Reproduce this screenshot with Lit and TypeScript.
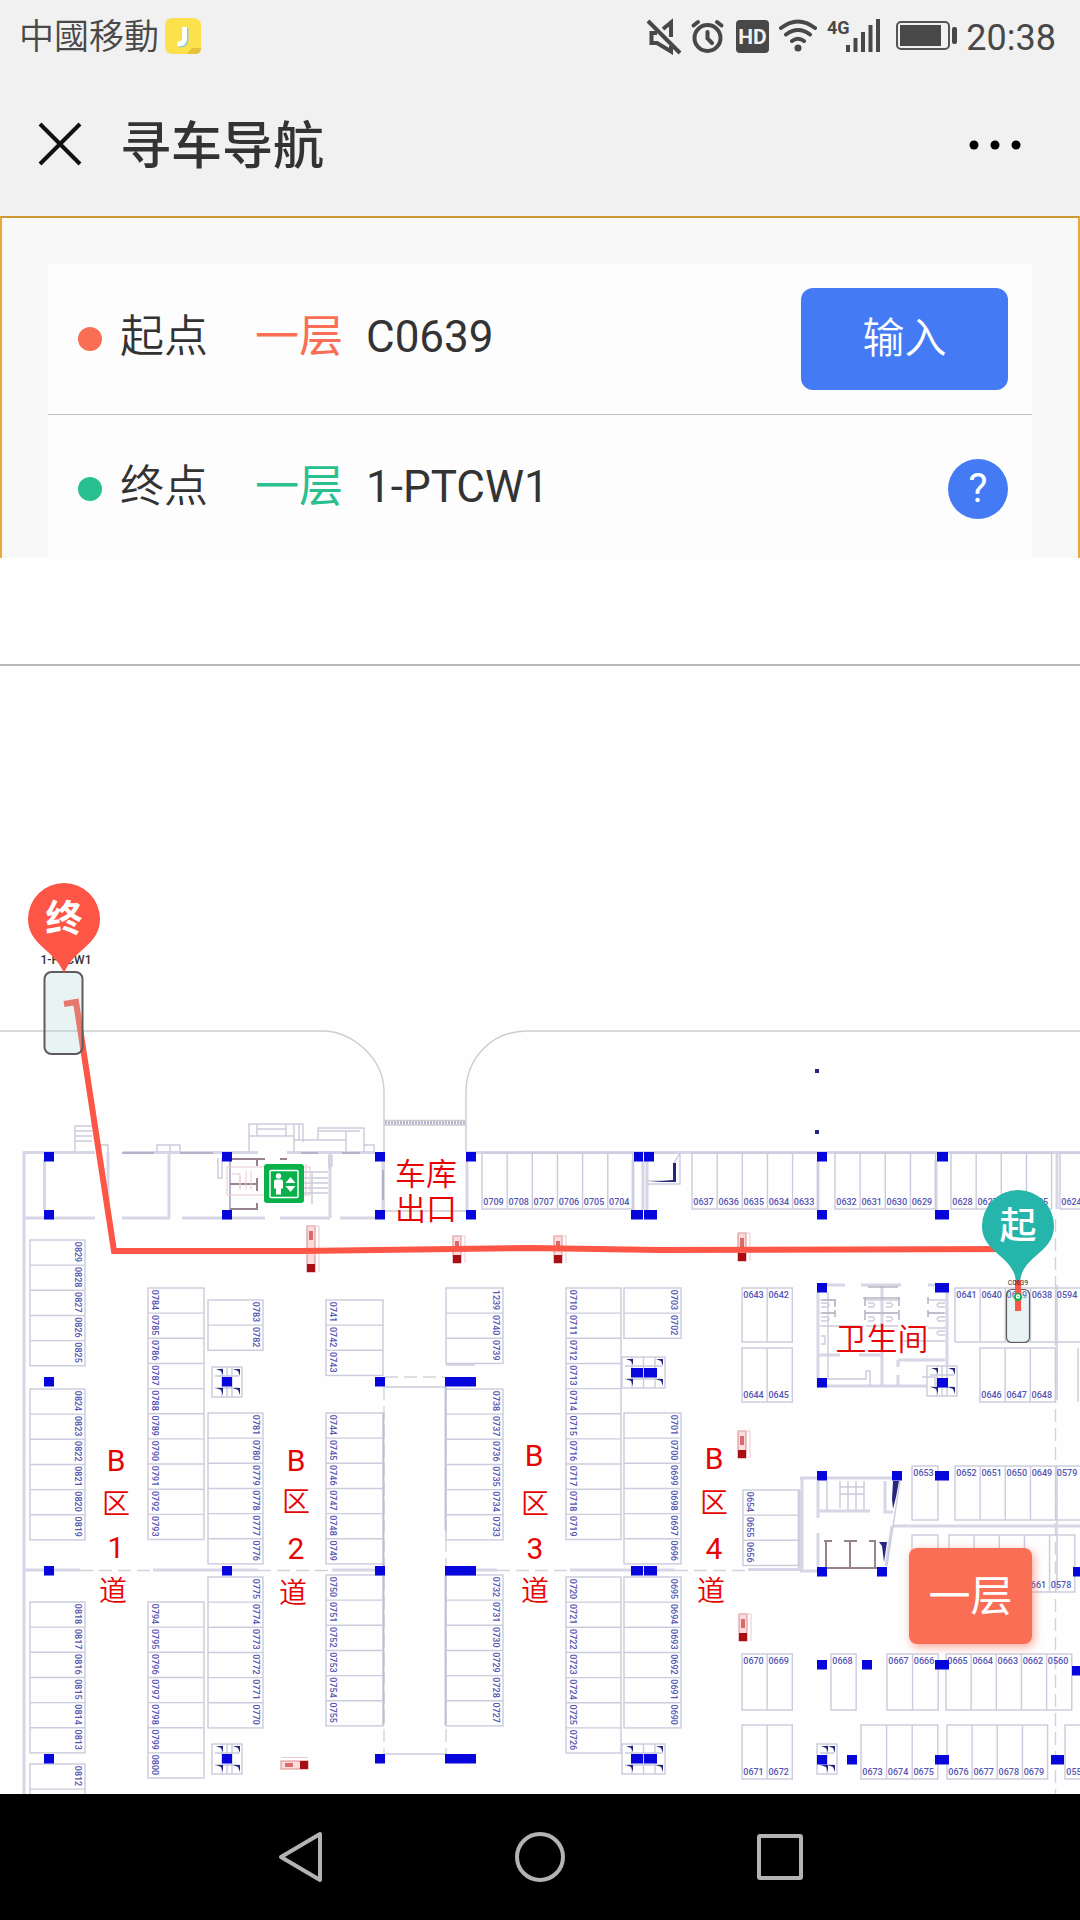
import { LitElement, html, svg, css } from "lit";
import { customElement, property } from "lit/decorators.js";

const STALL = 25.15;

type Side = "start" | "end";
interface Stalls { x: number; y: number; size: number; labels: string[]; side: Side; step?: number; }

const seq = (from: number, to: number): string[] => {
  const out: string[] = [];
  const d = from <= to ? 1 : -1;
  for (let n = from; n !== to + d; n += d) out.push(String(n).padStart(4, "0"));
  return out;
};

// Stalls stacked from top to bottom, with their numbers turned a quarter.
const STACKS: Stalls[] = [
  { x: 30, y: 1240, size: 55, labels: seq(829, 825), side: "end" },
  { x: 30, y: 1389, size: 55, labels: seq(824, 819), side: "end" },
  { x: 30, y: 1602, size: 55, labels: seq(818, 813), side: "end" },
  { x: 30, y: 1764, size: 55, labels: ["0812", ""], side: "end" },
  { x: 148, y: 1288, size: 56, labels: seq(784, 793), side: "start" },
  { x: 148, y: 1602, size: 56, labels: seq(794, 800), side: "start" },
  { x: 208, y: 1300, size: 55, labels: seq(783, 782), side: "end" },
  { x: 208, y: 1413, size: 55, labels: seq(781, 776), side: "end" },
  { x: 208, y: 1577, size: 55, labels: seq(775, 770), side: "end" },
  { x: 326, y: 1300, size: 57, labels: seq(741, 743), side: "start" },
  { x: 326, y: 1413, size: 57, labels: seq(744, 749), side: "start" },
  { x: 326, y: 1575, size: 57, labels: seq(750, 755), side: "start" },
  { x: 446, y: 1288, size: 57, labels: ["1239", "0740", "0739"], side: "end" },
  { x: 446, y: 1389, size: 57, labels: seq(738, 733), side: "end" },
  { x: 446, y: 1575, size: 57, labels: seq(732, 727), side: "end" },
  { x: 566, y: 1288, size: 55, labels: seq(710, 719), side: "start" },
  { x: 566, y: 1577, size: 55, labels: seq(720, 726), side: "start" },
  { x: 624, y: 1288, size: 57, labels: seq(703, 702), side: "end" },
  { x: 624, y: 1413, size: 57, labels: seq(701, 696), side: "end" },
  { x: 624, y: 1577, size: 57, labels: seq(695, 690), side: "end" },
  { x: 743, y: 1490, size: 56, labels: seq(654, 656), side: "start" },
];

// Stalls side by side, with upright numbers.
const RANKS: Stalls[] = [
  { x: 482, y: 1153, size: 56, labels: seq(709, 704), side: "end" },
  { x: 692, y: 1153, size: 56, labels: seq(637, 633), side: "end" },
  { x: 835, y: 1153, size: 56, labels: seq(632, 629), side: "end" },
  { x: 951, y: 1153, size: 56, labels: seq(628, 625), side: "end" },
  { x: 1060, y: 1153, size: 56, labels: ["0624"], side: "end" },
  { x: 742, y: 1288, size: 54, labels: ["0643", "0642"], side: "start" },
  { x: 742, y: 1348, size: 54, labels: ["0644", "0645"], side: "end" },
  { x: 955, y: 1288, size: 54, labels: ["0641", "0640", "0639", "0638", "0594"], side: "start" },
  { x: 980, y: 1348, size: 54, labels: ["0646", "0647", "0648"], side: "end" },
  { x: 912, y: 1466, size: 54, labels: ["0653"], side: "start", step: 26 },
  { x: 955, y: 1466, size: 54, labels: ["0652", "0651", "0650", "0649", "0579"], side: "start" },
  { x: 912, y: 1535, size: 57, labels: [""], side: "end", step: 26 },
  { x: 949, y: 1535, size: 57, labels: ["", "", "", "0661", "0578"], side: "end" },
  { x: 742, y: 1654, size: 56, labels: ["0670", "0669"], side: "start" },
  { x: 831, y: 1654, size: 56, labels: ["0668"], side: "start" },
  { x: 887, y: 1654, size: 56, labels: ["0667", "0666"], side: "start", step: 25.6 },
  { x: 946, y: 1654, size: 56, labels: ["0665", "0664", "0663", "0662", "0560"], side: "start" },
  { x: 742, y: 1725, size: 54, labels: ["0671", "0672"], side: "end" },
  { x: 861, y: 1725, size: 54, labels: ["0673", "0674", "0675"], side: "end", step: 25.6 },
  { x: 947, y: 1725, size: 54, labels: seq(676, 679), side: "end" },
  { x: 1065, y: 1725, size: 54, labels: ["0558"], side: "end" },
];

// x, y, width of each structural column; all share one height.
const PILLARS: [number, number, number][] = [
  [44, 1152, 10], [44, 1210, 10], [222, 1152, 10], [222, 1210, 10],
  [375, 1152, 10], [375, 1210, 10], [466, 1152, 10], [466, 1210, 10],
  [634, 1152, 9], [644, 1152, 10], [631, 1210, 12], [644, 1210, 13],
  [817, 1152, 10], [817, 1210, 10], [937, 1152, 11], [935, 1210, 14],
  [44, 1377, 10], [44, 1566, 10], [44, 1754, 10],
  [222, 1377, 10], [222, 1566, 10], [222, 1754, 10],
  [375, 1377, 10], [375, 1566, 10], [375, 1754, 10],
  [445, 1377, 31], [445, 1566, 31], [445, 1754, 31],
  [631, 1368, 12], [644, 1368, 13], [631, 1566, 12], [644, 1566, 13],
  [631, 1754, 12], [644, 1754, 13],
  [817, 1283, 10], [935, 1283, 14], [817, 1378, 10], [937, 1378, 11],
  [817, 1471, 10], [892, 1471, 10], [935, 1471, 14],
  [817, 1567, 10], [877, 1567, 10], [1073, 1567, 7],
  [817, 1660, 10], [862, 1660, 10], [935, 1660, 14], [1072, 1666, 8],
  [817, 1755, 10], [847, 1755, 10], [935, 1755, 14], [1051, 1755, 13],
];

const SHAFTS: [number, number, number, number][] = [
  [212, 1367, 30, 30], [212, 1744, 30, 30], [622, 1357, 43, 31],
  [622, 1744, 43, 30], [927, 1366, 30, 30], [817, 1744, 20, 30],
];

const HYDRANTS: [number, number, number][] = [
  [307, 1226, 46], [453, 1236, 27], [554, 1236, 27],
  [738, 1233, 28], [738, 1431, 27], [739, 1614, 27],
];

const AREA_TEXT: [number, number, string][] = [
  [116, 1471, "B"], [116, 1514, "区"], [116, 1558, "1"], [113, 1601, "道"],
  [296, 1471, "B"], [296, 1512, "区"], [296, 1559, "2"], [293, 1603, "道"],
  [534, 1466, "B"], [535, 1514, "区"], [535, 1559, "3"], [535, 1601, "道"],
  [714, 1469, "B"], [714, 1513, "区"], [714, 1559, "4"], [711, 1601, "道"],
];

@customElement("garage-map")
class GarageMap extends LitElement {
  static styles = css`
    :host { display: block; }
    .canvas { display: block; width: 100%; height: auto; background: #fefefe; font-family: Roboto, "Noto Sans CJK SC", sans-serif; }
    .line { fill: none; stroke: #cbcbdd; stroke-width: 1.4; }
    .wall { fill: none; stroke: #d6d6e6; stroke-width: 3; }
    .road { fill: none; stroke: #cdcdd0; stroke-width: 1.4; }
    .dash { fill: none; stroke: #d3d3dd; stroke-width: 1.4; stroke-dasharray: 13 6; }
    .dark { fill: none; stroke: #a9a6bf; stroke-width: 1.6; }
    .brown { fill: none; stroke: #97838f; stroke-width: 2; }
    .booth { fill: none; stroke: #b9b4c4; stroke-width: 1.6; }
    .pink { fill: none; stroke: #ecc9d0; stroke-width: 1; }
    .hatch { fill: none; stroke: #b4b4d0; stroke-width: 4; stroke-dasharray: 2 1; }
    .pillar { fill: #0505dc; }
    .navy { fill: #26267c; }
    .num { fill: #5555b4; font-family: "Liberation Sans Narrow", Roboto, sans-serif; font-size: 9px; font-weight: 500; text-anchor: middle; }
    .area { fill: #e60505; font-size: 30px; text-anchor: middle; }
    .place { fill: #e60505; font-size: 31px; font-weight: 350; text-anchor: middle; }
    .area.thin { font-size: 28px; font-weight: 350; }
    .route { fill: none; stroke: #fd5546; stroke-width: 6; }
    .car { fill: #acd5d5; fill-opacity: 0.27; stroke: #615a5c; stroke-width: 2; }
    .carstart { stroke-width: 1.2; }
    .tag { fill: #333; font-size: 12px; font-weight: 500; text-anchor: middle; }
    .tag.tiny { font-size: 7px; font-weight: 400; }
    .pinend { fill: #fd5546; }
    .pinstart { fill: #26b5aa; }
    .pintext { fill: #fff; font-size: 37px; font-weight: 700; text-anchor: middle; }
    .medium { font-weight: 500; }
    .green { fill: #09b14a; }
    .white { fill: #fff; }
    .frame { fill: none; stroke: #fff; stroke-width: 1.5; }
    .redbox { fill: #fbdcdc; stroke: #dc8a8a; stroke-width: 1; }
    .redend { fill: #a80f14; }
    .redmark { fill: #d86a6e; }
  `;

  private stack(s: Stalls) {
    const step = s.step ?? STALL;
    const tx = s.side === "start" ? s.x + 4 : s.x + s.size - 10;
    return svg`
      <rect class="line" x=${s.x} y=${s.y} width=${s.size} height=${step * s.labels.length}></rect>
      ${s.labels.map((t, i) => svg`
        ${i ? svg`<path class="line" d=${`M${s.x} ${s.y + i * step}h${s.size}`}></path>` : null}
        ${t ? svg`<text class="num" transform=${`translate(${tx} ${s.y + i * step + 12}) rotate(90)`}>${t}</text>` : null}`)}`;
  }

  private rank(s: Stalls) {
    const step = s.step ?? STALL;
    const ty = s.side === "start" ? s.y + 10 : s.y + s.size - 4;
    return svg`
      <rect class="line" x=${s.x} y=${s.y} width=${step * s.labels.length} height=${s.size}></rect>
      ${s.labels.map((t, i) => svg`
        ${i ? svg`<path class="line" d=${`M${s.x + i * step} ${s.y}v${s.size}`}></path>` : null}
        ${t ? svg`<text class="num" x=${s.x + i * step + 11.5} y=${ty}>${t}</text>` : null}`)}`;
  }

  private shaft([x, y, w, h]: [number, number, number, number]) {
    const r = x + w;
    const b = y + h;
    return svg`
      <rect class="line" x=${x} y=${y} width=${w} height=${h}></rect>
      <path class="line" d=${`M${x + 3} ${y + 9}H${r - 3}M${x + 3} ${b - 9}H${r - 3}M${x + 10} ${y}V${b}M${r - 10} ${y}V${b}M${x + w / 2} ${y}V${b}`}></path>
      <path class="navy" d=${`M${x + 4} ${y + 2}h7v6l-2-4zM${r - 9} ${y + 2}h7v7l-2-5zM${x + 4} ${b - 9}h7v7l-2-5zM${r - 9} ${b - 9}h7v7l-2-5z`}></path>`;
  }

  private structure() {
    return svg`
      <path class="road" d="M0 1031H322C352 1031 384 1058 384 1092V1210M1080 1031H527C490 1031 466 1060 466 1092V1152"></path>
      <path class="hatch" d="M385 1122.500H466"></path>
      <path class="road" d="M384 1120.500H466M384 1125H466M385 1211H466"></path>
      <path class="wall" d="M24 1152V1794M23 1152.500H95M123 1152.500H258M287 1152.500H375M467 1152.500H1080M23 1218H95M122 1218H170M182 1218H265M280 1218H330M340 1218H375M44.500 1160V1210M108 1152V1218M169 1152V1218M330 1152V1218M383 1152V1210M467 1160V1210M633 1160V1210M643 1160V1210M647 1160V1210M818 1160V1210M936 1160V1210M1057 1153V1209"></path>
      <path class="dark" d="M122 1153H154M180 1153H213M301 1153H318M342 1153H360M383 1170V1200M230 1153V1218"></path>
      <path class="line" d="M75 1152V1126H92M75 1131H92M75 1136H92M75 1141H92M98 1152V1145H108V1152M157 1152V1145H180V1152M170 1145V1152M218 1158V1178H222V1158"></path>
      <path class="line" d="M249 1152V1124H303V1142M257 1124V1136M286 1124V1136M249 1136H294M257 1129H286M294 1124V1152M299 1124V1140M294 1140H346V1152M318 1140V1128H364V1152M346 1131V1140M318 1131H360M364 1145H374V1152M332 1155V1166L329 1168V1155"></path>
      <path class="brown" d="M230 1159H257V1166M230 1184H257V1191M230 1209H257V1203M258 1159H265M280 1159H287M257 1178V1184"></path>
      <path class="pink" d="M227 1167H310V1195H227ZM232 1174H240V1190M240 1176V1188M246 1171V1190M251 1171V1190M306 1164V1196"></path>
      <path class="line" d="M304 1172H328M304 1178H328M304 1183H328M304 1188H328M304 1193H328M312 1172V1204"></path>
      <path class="line" d="M647 1184H680V1153M680 1153L674 1163V1181H647M654 1153H675"></path>
      <path class="navy" d="M673 1163h3v19h-25l22-2z"></path>
      <path class="dash" d="M80 1570.500H153M258 1570.500H332M385 1377H445M497 1570.500H570M675 1570.500H745M1055.500 1219V1794M384 1387V1764M446 1387V1764"></path>
      <path class="wall" d="M25 1570H80M153 1570H258M332 1570H383M476 1570H497M570 1570H675M748 1569.500H800"></path>
      <path class="dark" d="M383.500 1413V1725M445.500 1387V1530M445.500 1575V1725"></path>
      <path class="line" d="M385 1387H446M446 1365H475M385 1754H446M1057 1285V1400M1057 1466V1590M1078 1348V1402"></path>
      <path class="wall" d="M818 1292V1386H927M947 1292V1366M827 1285H845M861 1285H901M928 1285H946M882 1285V1386M819 1355H840M859 1355H881M898 1360H945M898 1360V1367M898 1375V1386"></path>
      <path class="line" d="M820 1300H835V1305M820 1326H860L862 1340M820 1313H835M866 1300H898M866 1313H898M928 1300H946M928 1313H946M928 1328H946M866 1326H898M900 1341H945M828 1292V1379H866V1371H870V1386M922 1377H935V1386"></path>
      <path class="booth" d="M822 1300H835M822 1313H835M835 1299V1307M835 1310V1317M865 1297V1306M865 1310V1320M865 1313H898M899 1297V1306M899 1310V1320M928 1297V1304M928 1310V1317M928 1313H944M868 1287H898M863 1298H900"></path>
      <path class="line" d="M821 1303h4q4 0 4 2t-4 2h-4M821 1317h4q4 0 4 2t-4 2h-4M868 1303h5q3 2 0 4h-5M868 1317h5q3 2 0 4h-5M886 1303h5q3 2 0 4h-5M886 1317h5q3 2 0 4h-5M945 1303h-6q-4 2 0 4h6M945 1317h-6q-4 2 0 4h6M945 1331h-6q-4 2 0 4h6M821 1336h4v8h-4"></path>
      <path class="wall" d="M799 1490V1571M802 1478V1571M800 1478H892M818 1481V1518M818 1533V1567M800 1571H817M818 1511H870M893 1512H885V1481M893 1526H1080M892 1526L886 1566"></path>
      <path class="line" d="M827 1511V1481M840 1481V1508M864 1481V1510M848 1481V1510M856 1481V1510M840 1494H864M840 1487H864M900 1481L887 1565"></path>
      <path class="brown" d="M824 1541H832M826 1541V1567M844 1541H857M850 1541V1567M869 1541H876M875 1541V1567M826 1568H877"></path>
      <path class="navy" d="M893 1481h6l-3 16-3 12-1-10zM879 1542h8l-3 20-2-16zM815 1069h4v4h-4zM815 1130h4v4h-4z"></path>`;
  }

  private hydrant([x, y, h]: [number, number, number]) {
    return svg`
      <rect class="redbox" x=${x} y=${y} width="8" height=${h}></rect>
      <path class="pink" d=${`M${x} ${y}H${x + 12}V${y + h}`}></path>
      <rect class="redmark" x=${x + 2} y=${y + 5} width="4" height="9"></rect>
      <rect class="redend" x=${x} y=${y + h - 8} width="8" height="8"></rect>`;
  }

  render() {
    return html`
      <svg class="canvas" viewBox="0 666 1080 1128" role="img" aria-label="停车场一层地图">
        ${this.structure()}
        ${STACKS.map((s) => this.stack(s))}
        ${RANKS.map((s) => this.rank(s))}
        ${SHAFTS.map((s) => this.shaft(s))}
        ${PILLARS.map(([x, y, w]) => svg`<rect class="pillar" x=${x} y=${y} width=${w} height="9.500"></rect>`)}
        ${HYDRANTS.map((h) => this.hydrant(h))}
        <rect class="redbox" x="281" y="1761" width="27" height="8"></rect>
        <path class="pink" d="M281 1757.500H308"></path>
        <rect class="redmark" x="285" y="1763" width="8" height="4"></rect>
        <rect class="redend" x="300" y="1761" width="8" height="8"></rect>

        <rect class="green" x="264" y="1164" width="40" height="39" rx="3"></rect>
        <rect class="frame" x="270" y="1170.500" width="28" height="27" rx="1"></rect>
        <circle class="white" cx="278.500" cy="1176" r="2.700"></circle>
        <path class="white" d="M276 1179.500h5q2 0 2 2v7h-2v6h-5v-6h-2v-7q0-2 2-2zM290.500 1177l5 6h-10zM290.500 1192l5-6h-10z"></path>

        <text class="place" x="426" y="1185">车库</text>
        <text class="place" x="426" y="1220">出口</text>
        <text class="place" x="882" y="1350">卫生间</text>
        ${AREA_TEXT.map(([x, y, t]) => svg`<text class=${/[B0-9]/.test(t) ? "area" : "area thin"} x=${x} y=${y}>${t}</text>`)}

        <path class="route" d="M64 1004L76 1002L114 1251L302 1251L530 1248L660 1250L1018 1249"></path>
        <text class="tag" x="66" y="964">1-PTCW1</text>
        <rect class="car" x="44.500" y="972" width="38" height="82" rx="7"></rect>
        <path class="pinend" d="M64 883a36 36 0 0 1 36 36c0 26-26 30-36 54c-10-24-36-28-36-54a36 36 0 0 1 36-36z"></path>
        <text class="pintext" x="64" y="932">终</text>

        <rect class="car carstart" x="1006.500" y="1289.500" width="23" height="53" rx="5"></rect>
        <path class="pinstart" d="M1018 1190a36 36 0 0 1 36 36c0 28-34 30-34 58h-4c0-28-34-30-34-58a36 36 0 0 1 36-36z"></path>
        <path class="route" d="M1018 1280V1311"></path>
        <text class="tag tiny" x="1018" y="1285">C0639</text>
        <circle class="green" cx="1018" cy="1297" r="4"></circle>
        <circle class="frame" cx="1018" cy="1296.500" r="1.500"></circle>
        <text class="pintext medium" x="1018" y="1239">起</text>
      </svg>`;
  }
}

@customElement("status-bar")
class StatusBar extends LitElement {
  static styles = css`
    :host { display: flex; align-items: center; justify-content: space-between; height: 72px; padding: 0 24px 0 19px; color: #484848; font-family: Roboto, "Noto Sans CJK TC", sans-serif; font-size: 36px; line-height: 40px; }
    .group { display: flex; align-items: center; }
    .carrier { font-size: 35px; font-weight: 350; margin-right: 6px; padding-top: 4px; }
    .time { padding-top: 4px; }
    .icons { width: 316px; height: 40px; margin-right: 6px; }
    .ink { fill: #484848; }
    .stroke { fill: none; stroke: #484848; stroke-width: 4; }
    .round { stroke-linecap: round; }
    .edge { fill: none; stroke: #555; stroke-width: 2; }
    .hd { fill: #f1f1f1; font-size: 21px; font-weight: 700; text-anchor: middle; }
    .net { fill: #484848; font-size: 18px; font-weight: 700; font-family: "Liberation Sans Narrow", Roboto, sans-serif; }
    .app { width: 36px; height: 36px; }
    .yellow { fill: #fde14c; }
    .blue { fill: none; stroke: #8fc8dc; stroke-width: 5; }
    .jay { fill: none; stroke: #fff; stroke-width: 5; }
    .corner { fill: #e6c23c; }
  `;
  render() {
    return html`
      <div class="group">
        <span class="carrier">中國移動</span>
        <svg class="app" viewBox="0 0 36 36" aria-hidden="true">
          <rect class="yellow" width="36" height="36" rx="7"></rect>
          <path class="corner" d="M22 36L27 30H36Q36 36 30 36Z"></path>
          <path class="blue" d="M21 10V22Q21 27 14 27"></path>
          <path class="jay" d="M19.500 9V21Q19.500 26 12.500 26"></path>
        </svg>
      </div>
      <div class="group">
        <svg class="icons" viewBox="644 16 316 40" aria-hidden="true">
          <path class="stroke" d="M657 33H651.500V43H657L671 51.500V46M663 29L671 22.500V37M648 21L680 53"></path>
          <circle class="stroke" cx="707.500" cy="38" r="13"></circle>
          <path class="stroke round" d="M707.500 32V38.500L712 43M693.500 25.500L698 22M721.500 25.500L717 22"></path>
          <rect class="ink" x="736" y="20" width="33" height="33" rx="4"></rect>
          <text class="hd" x="752.500" y="44">HD</text>
          <path class="stroke round" d="M781 28Q798 15 815 28M786 34.500Q798 25.500 810 34.500M792 41Q798 36.500 804 41"></path>
          <circle class="ink" cx="798" cy="48" r="3.500"></circle>
          <text class="net" x="827" y="34">4G</text>
          <path class="stroke" d="M848 45V52M855.500 38V52M863 32V52M870.500 25V52M878 19V52"></path>
          <rect class="edge" x="897" y="22" width="52" height="27" rx="4"></rect>
          <rect class="ink" x="900" y="25" width="41" height="21"></rect>
          <rect class="ink" x="952" y="27" width="5" height="17" rx="2"></rect>
        </svg>
        <span class="time">20:38</span>
      </div>`;
  }
}

@customElement("trip-row")
class TripRow extends LitElement {
  @property() kind: "from" | "to" = "from";
  @property() name = "";
  @property() floor = "";
  @property() place = "";
  static styles = css`
    :host { display: grid; grid-template-columns: 24px 117px 93px 1fr auto; column-gap: 18px; align-items: center; padding: 24px 24px 24px 30px; color: #333; font-size: 44px; line-height: 60px; }
    .dot { width: 24px; height: 24px; border-radius: 50%; }
    .text { padding-bottom: 4px; white-space: nowrap; }
    .name { font-weight: 350; }
    .from.dot { background: #f96e55; }
    .to.dot { background: #28c08e; }
    .from.text { color: #f96e55; }
    .to.text { color: #28c08e; }
  `;
  render() {
    return html`
      <span class="dot ${this.kind}"></span>
      <span class="text name">${this.name}</span>
      <span class="text ${this.kind}">${this.floor}</span>
      <span class="text">${this.place}</span>
      <slot></slot>`;
  }
}

@customElement("app-root")
class AppRoot extends LitElement {
  static styles = css`
    :host { display: flex; flex-direction: column; min-height: 100vh; background: #fefefe; font-family: Roboto, "Noto Sans CJK SC", "Noto Sans CJK TC", sans-serif; color: #333; }
    button { border: 0; padding: 0; margin: 0; background: none; font: inherit; color: inherit; cursor: pointer; display: flex; align-items: center; justify-content: center; }
    .head { background: #f1f1f1; }
    .bar { display: flex; align-items: center; gap: 36px; height: 144px; padding: 0 54px 0 36px; box-sizing: border-box; }
    .title { flex: 1; margin: 0; padding-top: 6px; font-size: 51px; line-height: 72px; font-weight: 500; }
    .close { width: 48px; height: 48px; }
    .more { width: 60px; height: 48px; }
    .glyph { display: block; width: 100%; height: 100%; }
    .cross { fill: none; stroke: #111; stroke-width: 4; }
    .panel { background: #f8f8f8; border: 2px solid #e6ab3a; border-top-color: #cf9730; border-bottom: 0; padding: 46px 46px 0; }
    .card { background: #fdfdfd; border-radius: 4px 4px 0 0; }
    .first { border-bottom: 1px solid #c2c2c2; }
    .second { min-height: 91px; padding-top: 28px; }
    .enter { width: 207px; height: 102px; border-radius: 12px; background: #447bf5; color: #fff; font-size: 42px; font-weight: 350; }
    .help { width: 60px; height: 60px; border-radius: 50%; background: #447bf5; color: #fff; font-size: 40px; }
    .rule { margin: 106px 0 0; border: 0; border-top: 2px solid #b9b9b9; }
    .map { position: relative; flex: 1; }
    .floor { position: absolute; right: 48px; bottom: 150px; width: 123px; height: 96px; padding-bottom: 8px; border-radius: 8px; background: #f96e55; color: #fff; font-size: 42px; box-shadow: 2px 3px 10px rgba(249, 110, 85, 0.6); }
    .nav { display: flex; justify-content: center; gap: 180px; height: 126px; align-items: center; background: #000; }
    .key { width: 60px; height: 60px; }
    .soft { fill: none; stroke: #b3b3b3; stroke-width: 4; stroke-linejoin: round; }
  `;
  render() {
    return html`
      <header class="head">
        <status-bar></status-bar>
        <div class="bar">
          <button class="close" aria-label="关闭">
            <svg class="glyph" viewBox="0 0 48 48"><path class="cross" d="M4 4L44 44M44 4L4 44"></path></svg>
          </button>
          <h1 class="title">寻车导航</h1>
          <button class="more" aria-label="更多">
            <svg class="glyph" viewBox="0 0 60 48"><circle cx="8" cy="25" r="4.500"></circle><circle cx="29" cy="25" r="4.500"></circle><circle cx="50" cy="25" r="4.500"></circle></svg>
          </button>
        </div>
      </header>
      <section class="panel">
        <div class="card">
          <trip-row class="first" kind="from" name="起点" floor="一层" place="C0639">
            <button class="enter">输入</button>
          </trip-row>
          <trip-row class="second" kind="to" name="终点" floor="一层" place="1-PTCW1">
            <button class="help" aria-label="帮助">?</button>
          </trip-row>
        </div>
      </section>
      <hr class="rule" />
      <main class="map">
        <garage-map></garage-map>
        <button class="floor">一层</button>
      </main>
      <nav class="nav">
        <button class="key" aria-label="返回"><svg class="glyph" viewBox="0 0 60 60"><path class="soft" d="M50 7V53L11 30Z"></path></svg></button>
        <button class="key" aria-label="主页"><svg class="glyph" viewBox="0 0 60 60"><circle class="soft" cx="30" cy="30" r="23"></circle></svg></button>
        <button class="key" aria-label="最近任务"><svg class="glyph" viewBox="0 0 60 60"><rect class="soft" x="9" y="9" width="42" height="42" rx="1"></rect></svg></button>
      </nav>`;
  }
}
